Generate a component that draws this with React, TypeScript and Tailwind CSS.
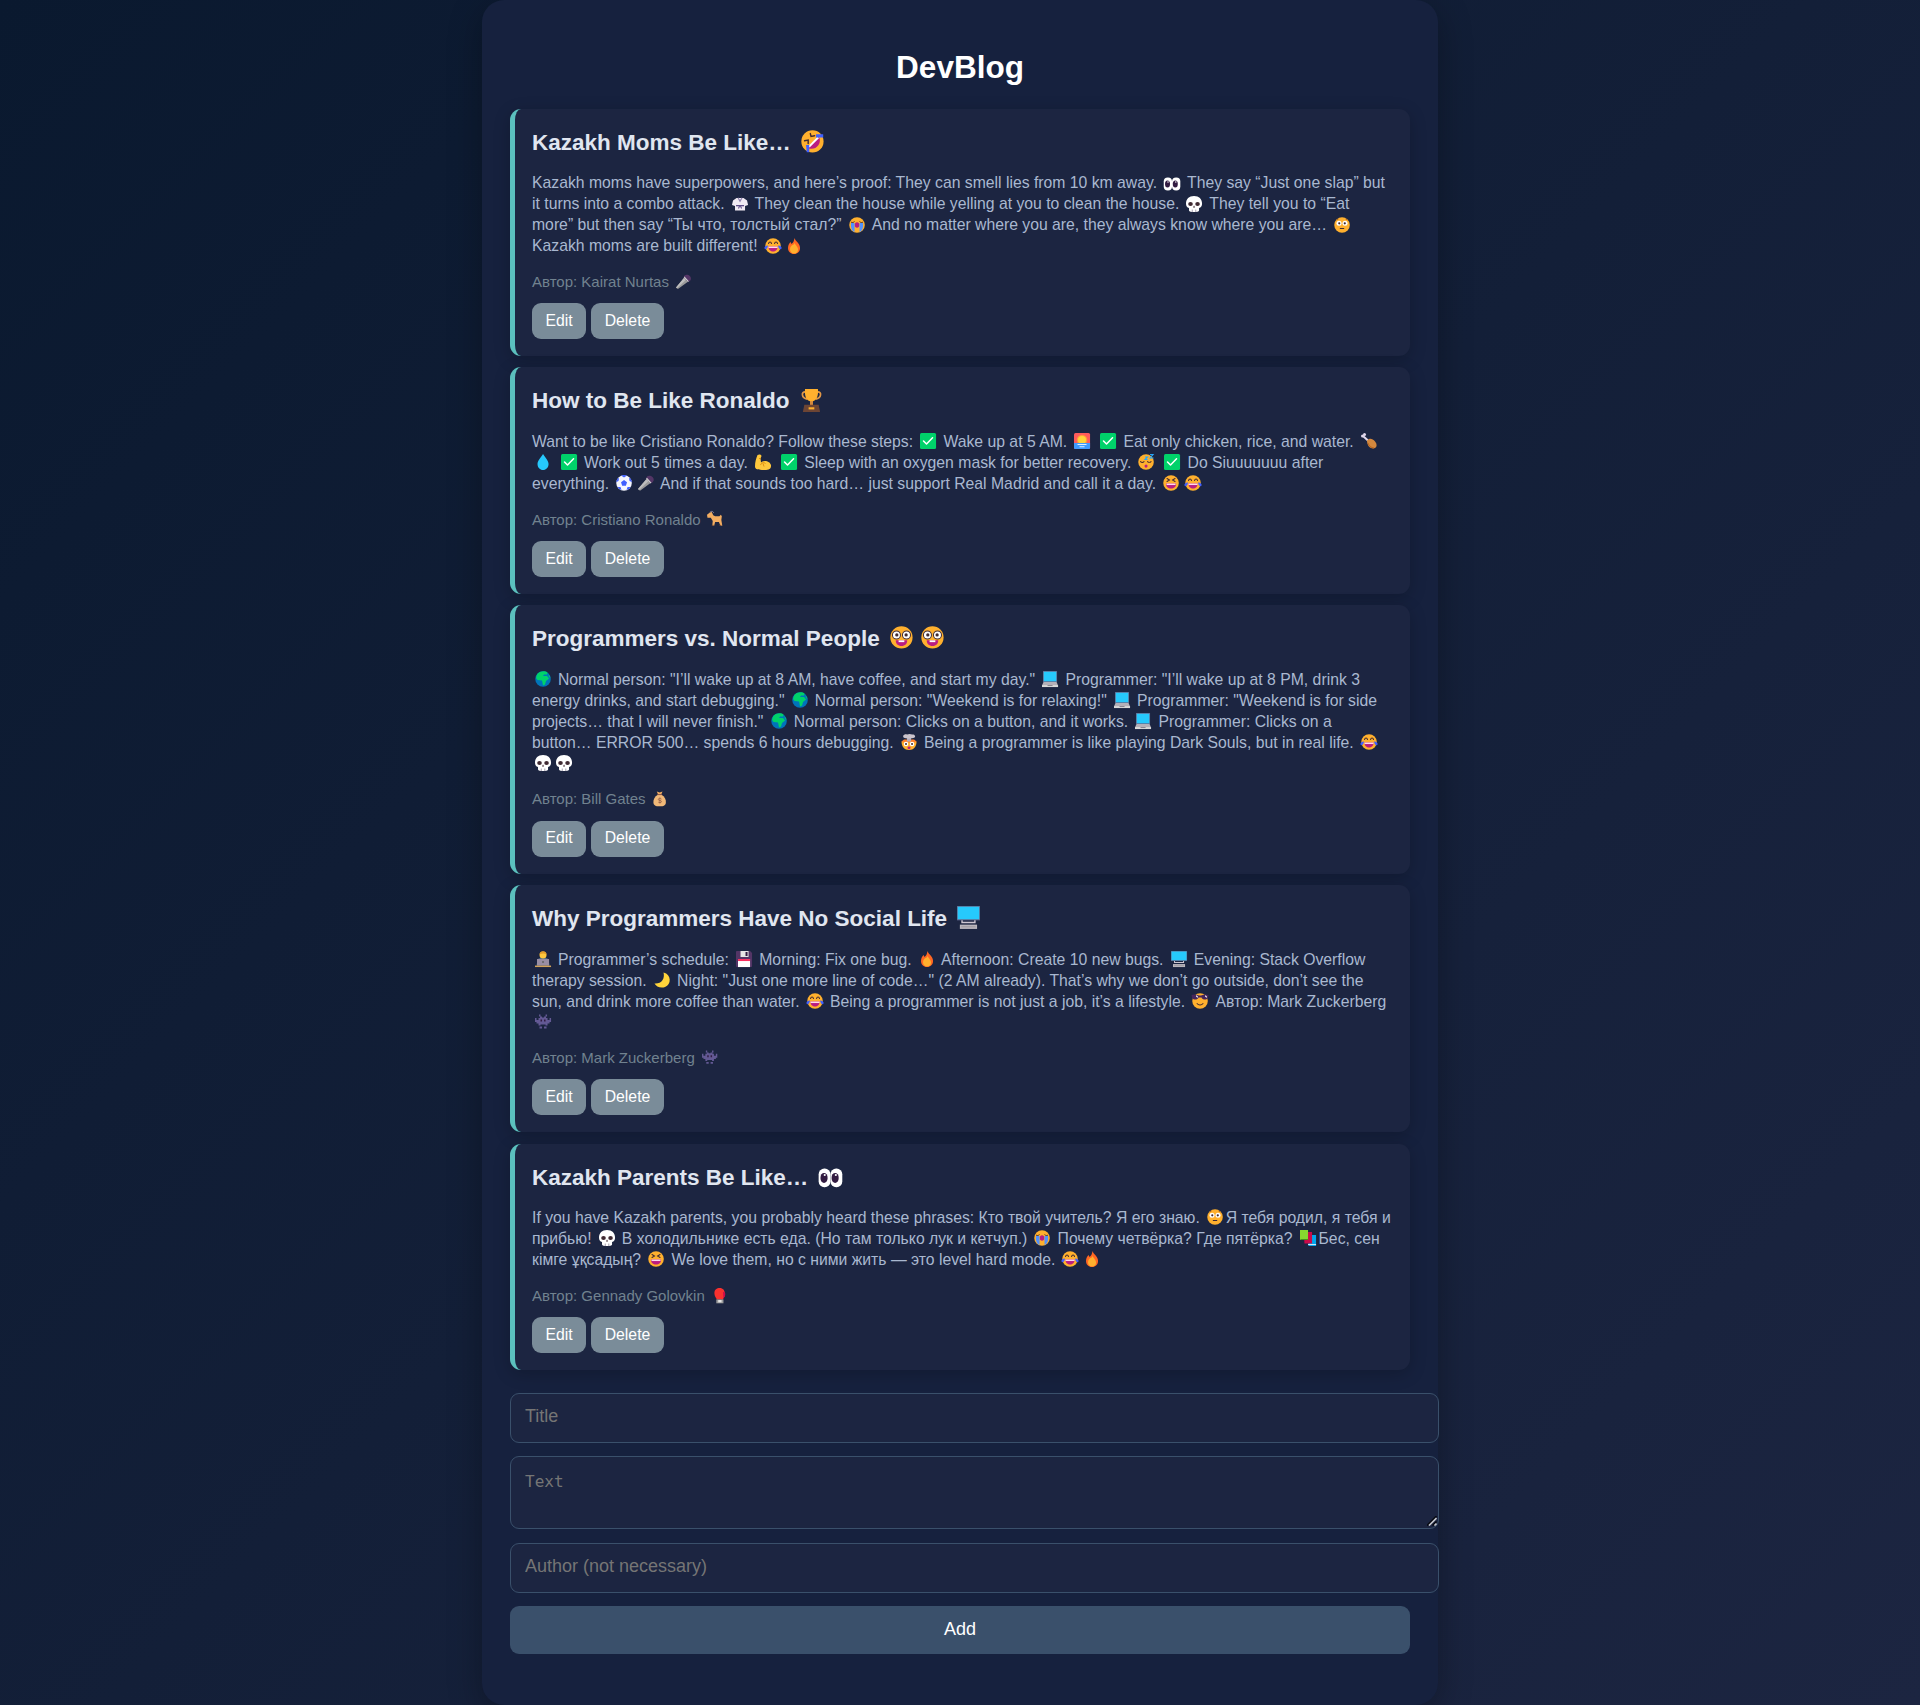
import React, { ReactNode } from "react";

const posts = [
  {
    title: "Kazakh Moms Be Like… 🤣",
    lines: [
      "Kazakh moms have superpowers, and here’s proof: They can smell lies from 10 km away. 👀 They say “Just one slap” but",
      "it turns into a combo attack. 🥋 They clean the house while yelling at you to clean the house. 💀 They tell you to “Eat",
      "more” but then say “Ты что, толстый стал?” 😭 And no matter where you are, they always know where you are… 😳",
      "Kazakh moms are built different! 😂🔥",
    ],
    author: "Kairat Nurtas 🎤",
  },
  {
    title: "How to Be Like Ronaldo 🏆",
    lines: [
      "Want to be like Cristiano Ronaldo? Follow these steps: ✅ Wake up at 5 AM. 🌅 ✅ Eat only chicken, rice, and water. 🍗",
      "💧 ✅ Work out 5 times a day. 💪 ✅ Sleep with an oxygen mask for better recovery. 😴 ✅ Do Siuuuuuuu after",
      "everything. ⚽🎤 And if that sounds too hard… just support Real Madrid and call it a day. 😆😂",
    ],
    author: "Cristiano Ronaldo 🐐",
  },
  {
    title: "Programmers vs. Normal People 🤓🤓",
    lines: [
      "🌍 Normal person: \"I’ll wake up at 8 AM, have coffee, and start my day.\" 💻 Programmer: \"I’ll wake up at 8 PM, drink 3",
      "energy drinks, and start debugging.\" 🌍 Normal person: \"Weekend is for relaxing!\" 💻 Programmer: \"Weekend is for side",
      "projects… that I will never finish.\" 🌍 Normal person: Clicks on a button, and it works. 💻 Programmer: Clicks on a",
      "button… ERROR 500… spends 6 hours debugging. 🤯 Being a programmer is like playing Dark Souls, but in real life. 😂",
      "💀💀",
    ],
    author: "Bill Gates 💰",
  },
  {
    title: "Why Programmers Have No Social Life 🖥",
    lines: [
      "🧑‍💻 Programmer’s schedule: 💾 Morning: Fix one bug. 🔥 Afternoon: Create 10 new bugs. 🖥 Evening: Stack Overflow",
      "therapy session. 🌙 Night: \"Just one more line of code…\" (2 AM already). That’s why we don’t go outside, don’t see the",
      "sun, and drink more coffee than water. 😂 Being a programmer is not just a job, it’s a lifestyle. 😎 Автор: Mark Zuckerberg",
      "👾",
    ],
    author: "Mark Zuckerberg 👾",
  },
  {
    title: "Kazakh Parents Be Like… 👀",
    lines: [
      "If you have Kazakh parents, you probably heard these phrases: Кто твой учитель? Я его знаю. 😳Я тебя родил, я тебя и",
      "прибью! 💀 В холодильнике есть еда. (Но там только лук и кетчуп.) 😭 Почему четвёрка? Где пятёрка? 📚Бес, сен",
      "кімге ұқсадың? 😆 We love them, но с ними жить — это level hard mode. 😂🔥",
    ],
    author: "Gennady Golovkin 🥊",
  },
];

const face = <circle cx="16" cy="16" r="15.5" fill="#ffb02e" />;
const dark = "#402a32";

const ICONS: Record<string, ReactNode> = {
  "🤣": (
    <>
      {face}
      <path d="M26 12c2 8-5 16-14 14-2-.5-3-2-1.500-3.500L22 11c1.500-1.500 3.500-1 4 1z" fill="#bb1d80" />
      <path d="m10 22.500 13-13 2 2-13 13z" fill="#fff" />
      <path d="m13 5 1 4 5-1M5 15l5-1 0 5" fill="none" stroke={dark} strokeWidth="2" strokeLinecap="round" />
      <path d="M21 6h10v4.500H21zM7 21h4.500v10H8z" fill="#3f5fff" />
    </>
  ),
  "👀": (
    <>
      <rect x="-0.5" y="5" width="16.500" height="26" rx="8" fill="#fff" />
      <rect x="16" y="5" width="16.500" height="26" rx="8" fill="#fff" />
      <ellipse cx="7" cy="18" rx="5" ry="7" fill="#321b41" />
      <ellipse cx="22.500" cy="18" rx="5" ry="7" fill="#321b41" />
      <circle cx="8" cy="14" r="1.500" fill="#fff" />
      <circle cx="23.500" cy="14" r="1.500" fill="#fff" />
    </>
  ),
  "🥋": (
    <>
      <path d="M9 4h14l7 5 2 9-6 2v9H6v-9l-6-2 2-9z" fill="#f0eaf3" />
      <path d="m11 4 5 9 5-9-2-1-3 5-3-5z" fill="#8d80ad" />
      <path d="M8 18h16v2.500H8z" fill="#574582" />
      <path d="m15 20-2 5M17 20l2 5" stroke="#574582" strokeWidth="2" />
    </>
  ),
  "💀": (
    <>
      <path d="M16 0C6 0 0 6 0 15c0 5 2 8 6 9v5c0 4 20 4 20 0v-5c4-1 6-4 6-9C32 6 26 0 16 0z" fill="#fff" />
      <ellipse cx="9" cy="16" rx="4.600" ry="4" fill={dark} />
      <ellipse cx="23" cy="16" rx="4.600" ry="4" fill={dark} />
      <path d="m16 19 2 4h-4z" fill={dark} />
      <path d="M12.500 27v5M19.500 27v5" stroke="#8b8296" strokeWidth="1.500" />
    </>
  ),
  "😭": (
    <>
      {face}
      <ellipse cx="16" cy="16" rx="4.500" ry="5.500" fill="#bb1d80" />
      <path d="M4 12h7v18c-5-2-8-8-7-18zM21 12h7c1 10-2 16-7 18z" fill="#5092ff" />
      <path d="M4 10c2.500 2 5 1 7-1M21 9c2 2 4.500 3 7 1" fill="none" stroke={dark} strokeWidth="1.800" />
    </>
  ),
  "😳": (
    <>
      {face}
      <circle cx="10" cy="12.500" r="5" fill="#fff" />
      <circle cx="22" cy="12.500" r="5" fill="#fff" />
      <circle cx="10.500" cy="12.500" r="2.200" fill={dark} />
      <circle cx="21.500" cy="12.500" r="2.200" fill={dark} />
      <path d="M12.500 23h7" stroke={dark} strokeWidth="2" strokeLinecap="round" />
      <path d="M5 6l4-2M27 6l-4-2" stroke="#9a5b22" strokeWidth="1.500" />
    </>
  ),
  "😂": (
    <>
      {face}
      <path d="M7 17h18c0 7-4 10-9 10s-9-3-9-10z" fill="#bb1d80" />
      <path d="M7 17h18v3H7z" fill="#ffd9ec" />
      <path d="M7 11c1-4 5-4 6 0M19 11c1-4 5-4 6 0" fill="none" stroke={dark} strokeWidth="2" strokeLinecap="round" />
      <path d="M6 15c-5 0-8 3-7 6 2 3 6 1 7-6zM26 15c5 0 8 3 7 6-2 3-6 1-7-6z" fill="#3f5fff" />
    </>
  ),
  "🔥": (
    <>
      <path d="M17 0c1 6 11 10 11 20 0 7-5 12-12 12S4 27 4 20c0-6 3-10 5-12l2 4c4-3 5-7 6-12z" fill="#ff6723" />
      <path d="M17 9c1 5 7 8 7 14 0 5-3 8-8 8s-8-4-8-8c0-5 3-8 5-9 2 0 4-2 4-5z" fill="#ffb02e" />
    </>
  ),
  "🎤": (
    <>
      <path d="M17 8l8 8L4 31.500l-4-3.500z" fill="#9b9b9b" />
      <path d="M17 8l4 4L2 30l-2-2z" fill="#bebebe" />
      <path d="M18 3c4-4 15 0 13 8-1 4-4 5-6 5l-9-9z" fill="#533566" />
      <path d="m17 6 9 10" stroke="#d3d3d3" strokeWidth="2.200" />
    </>
  ),
  "🏆": (
    <>
      <path d="M8 4C1 3 2 13 10 14M24 4c7-1 6 9-2 10" fill="none" stroke="#e19747" strokeWidth="2.400" />
      <path d="M7 0h18c1 10-2 16-7 17v5h-4v-5C9 16 6 10 7 0z" fill="#ffb02e" />
      <path d="M14 17h4v6h-4z" fill="#d3883e" />
      <path d="M6 22h20l2 10H4z" fill="#6d4534" />
      <path d="M12 25.500h8v3h-8z" fill="#ffb02e" />
    </>
  ),
  "✅": (
    <>
      <rect x="0" y="0" width="32" height="32" rx="3" fill="#00d26a" />
      <path d="m7 16 6 6L25 9.500" fill="none" stroke="#fff" strokeWidth="3" strokeLinecap="round" strokeLinejoin="round" />
    </>
  ),
  "🌅": (
    <>
      <rect x="0" y="0" width="32" height="32" rx="3" fill="#ff5b5b" />
      <circle cx="16" cy="14" r="10.500" fill="#ff9a3d" />
      <circle cx="16" cy="14" r="8" fill="#ffd43b" />
      <path d="M0 20h32v9c0 2-1 3-3 3H3c-2 0-3-1-3-3z" fill="#3f9cff" />
      <path d="M7 23h18M11 27.500h10" stroke="#dff0ff" strokeWidth="2" />
    </>
  ),
  "🍗": (
    <>
      <path d="m4 6 12 11" stroke="#e1d8ec" strokeWidth="4" />
      <circle cx="3" cy="6" r="3" fill="#e1d8ec" />
      <circle cx="7" cy="3" r="3" fill="#e1d8ec" />
      <path d="M12 15c6-6 11-3 16 2 5 6 4 13-4 14-8 0-12-8-12-16z" fill="#d3883e" />
      <path d="M14 20c2 6 6 9 12 10" fill="none" stroke="#b8651f" strokeWidth="2" />
    </>
  ),
  "💧": <path d="M16 0c4 7 11 13 11 20 0 7-5 12-11 12S5 27 5 20C5 13 12 7 16 0z" fill="#26c9fc" />,
  "💪": (
    <>
      <path d="M5 2c3-2 8-1 8 2l-2 5 1 8c5-6 19-3 20 6 0 7-4 9-13 9C7 32 0 31 0 25 0 16 2 9 5 2z" fill="#ffc83d" />
      <path d="M11 22c2-5 7-6 10-3M16 19l2 6M8 9h4" fill="none" stroke="#d67d00" strokeWidth="1.500" />
    </>
  ),
  "😴": (
    <>
      {face}
      <path d="M5 15c2 2 5 2 7 0M19 15c2 2 5 2 7 0" fill="none" stroke={dark} strokeWidth="2" strokeLinecap="round" />
      <ellipse cx="16" cy="24" rx="3" ry="3.200" fill="#bb1d80" />
      <path d="M14 6h5l-5 5h5M24 1h6l-6 7h7" fill="none" stroke="#26a9fc" strokeWidth="2.200" />
    </>
  ),
  "⚽": (
    <>
      <circle cx="16" cy="16" r="15.500" fill="#f4f6ff" />
      <path d="m16 10 6 4.500-2.300 7h-7.400l-2.300-7zM10 1l6 4 6-4-6-1zM0 14l5-2 1-6-3 1zM32 14l-5-2-1-6 3 1zM3 24l6 0 2 6-5-2zM29 24l-6 0-2 6 5-2z" fill="#3f5fff" />
    </>
  ),
  "😆": (
    <>
      {face}
      <path d="M6 17h20c0 7-4 10-10 10S6 24 6 17z" fill="#bb1d80" />
      <path d="M7 17h18v3H7z" fill="#ffd9ec" />
      <path d="m8 7 5 3-5 3M24 7l-5 3 5 3" fill="none" stroke={dark} strokeWidth="2" strokeLinecap="round" />
    </>
  ),
  "🐐": (
    <>
      <path d="M0 8l6-5 4-1 3 7 4 2h9l3-3 2 3-1 8 2 12h-4l-3-8h-8l-2 8h-4l1-10-4-7H1z" fill="#f3ad61" />
      <path d="M6 3c4-4 7-2 8 1" fill="none" stroke="#998ea4" strokeWidth="2" />
      <path d="M10 30h4M26 30h4" stroke="#6d4534" strokeWidth="2" />
    </>
  ),
  "🤓": (
    <>
      {face}
      <path d="M8 20h16c0 5-3 8-8 8s-8-3-8-8z" fill="#bb1d80" />
      <path d="M12 20h8v2.500h-8z" fill="#fff" />
      <circle cx="9" cy="12.500" r="5.600" fill="#fff" stroke={dark} strokeWidth="1.400" />
      <circle cx="23" cy="12.500" r="5.600" fill="#fff" stroke={dark} strokeWidth="1.400" />
      <circle cx="9.500" cy="12.500" r="2.300" fill={dark} />
      <circle cx="22.500" cy="12.500" r="2.300" fill={dark} />
    </>
  ),
  "🌍": (
    <>
      <circle cx="16" cy="16" r="15.500" fill="#0074ba" />
      <path d="M4 7c5-8 17-8 21-4l-1 4-6 0-2 3 8 0 4 5-6 5-2 7-4 2-2-10-9-1-3-4z" fill="#00d26a" />
      <path d="M27 6l4 8-3-2z" fill="#00d26a" />
    </>
  ),
  "💻": (
    <>
      <path d="M2 0h28v22H2z" fill="#636b8f" />
      <path d="M3.500 1.500h25v19h-25z" fill="#26c9fc" />
      <path d="M3 22h26l3 7H0z" fill="#b4b0b8" />
      <path d="M0 28h32v4H0z" fill="#d9d9d9" />
      <path d="M11 28h10v2H11z" fill="#85808a" />
    </>
  ),
  "🤯": (
    <>
      <path d="M1 15h30c0 10-6 17-15 17S1 25 1 15z" fill="#ffb02e" />
      <path d="M1 15l5-4h20l5 4-4 2H5z" fill="#ff822d" />
      <path d="M12 6h8v9h-8z" fill="#b4acbc" />
      <path d="M4 4c2-4 6-4 8-3 4-2 8-1 10 0 5-1 8 4 5 6-6 3-17 3-22 0z" fill="#c9c3cc" />
      <circle cx="10" cy="20" r="4.500" fill="#fff" />
      <circle cx="22" cy="20" r="4.500" fill="#fff" />
      <circle cx="10" cy="20" r="2" fill={dark} />
      <circle cx="22" cy="20" r="2" fill={dark} />
      <ellipse cx="16" cy="27.500" rx="3" ry="2.800" fill="#bb1d80" />
    </>
  ),
  "💰": (
    <>
      <path d="m10 1 6 2 6-2-3 7h-6z" fill="#f3ad61" />
      <path d="M12 8h8c6 4 10 10 9 17-1 5-4 7-13 7S4 30 3 25c-1-7 3-13 9-17z" fill="#f0b878" />
      <path d="M11 7.500h10" stroke="#8c5543" strokeWidth="2" />
      <path d="M20 17c-2-3-7-2-7 1 1 3 7 1 7 4s-6 3-7 1M16.500 14v12" fill="none" stroke="#8c5543" strokeWidth="1.500" />
    </>
  ),
  "🖥": (
    <>
      <path d="M0 0h32v20H0z" fill="#636b8f" />
      <path d="M1 1h30v17.500H1z" fill="#26c9fc" />
      <path d="M7 20v3h18v-3" fill="none" stroke="#cdc6d2" strokeWidth="2" />
      <path d="M4 26h24v6H4z" fill="#b9b5bc" />
      <path d="M6 29h20" stroke="#8d8992" strokeWidth="1" />
    </>
  ),
  "🧑‍💻": (
    <>
      <path d="M5 17c2-5 20-5 22 0l2 12H3z" fill="#4a6b8a" />
      <circle cx="16" cy="8" r="7" fill="#ffc83d" />
      <path d="M9 7c0-9 14-9 14 0-4-3-9-3-14 0z" fill="#e39d2b" />
      <path d="M4 16h24v13H4z" fill="#998ea4" />
      <circle cx="16" cy="22" r="2" fill="#636363" />
      <path d="M0 29h32v3H0z" fill="#d3a35a" />
    </>
  ),
  "💾": (
    <>
      <path d="M0 2c0-1 1-2 2-2h26l4 4v26c0 1-1 2-2 2H2c-1 0-2-1-2-2z" fill="#533566" />
      <path d="M9 0h16v12H9z" fill="#e6e6e6" />
      <path d="M19 2h4v8h-4z" fill="#321b41" />
      <path d="M4 16h24v16H4z" fill="#fff" />
      <path d="M4 16h24v4H4z" fill="#f92f60" />
    </>
  ),
  "🌙": <path d="M19 1c16 4 16 24 3 29C13 33 4 29 1 23c14 1 21-9 18-22z" fill="#ffd43b" />,
  "😎": (
    <>
      {face}
      <path d="M-1 4c5-2 10-1 15 1h4c5-2 10-3 15-1l-1 5c-1 5-11 6-13 0h-6c-2 6-12 5-13 0z" fill="#46255c" />
      <path d="m9 6 2 2M27 6l2 2" stroke="#fff" strokeWidth="2.200" strokeLinecap="round" />
      <path d="M10 21c3 4 9 4 12 0" fill="none" stroke={dark} strokeWidth="2" strokeLinecap="round" />
    </>
  ),
  "👾": (
    <>
      <path d="M8 1h3v4h3v2h4V5h3V1h3v4h-2v3h3v4h4V8h3v8h-3v3h-4v4h-4v-2H11v2H7v-4H3v-3H0V8h3v4h4V8h3V5H8zM9 25h5v4H9zM18 25h5v4h-5z" fill="#635994" />
      <path d="M11 11h3v4h-3zM18 11h3v4h-3z" fill="#321b41" />
    </>
  ),
  "📚": (
    <>
      <path d="M15 10h17v22H17z" fill="#00a6ed" />
      <path d="M16 28h16v2H16z" fill="#d8eefa" />
      <path d="M7 4h17v23H9z" fill="#ca0b4a" />
      <path d="M0 0h16v20H2c-1 0-2-1-2-2z" fill="#86d72f" />
      <path d="M1 18h15v2H2z" fill="#44911b" />
    </>
  ),
  "🥊": (
    <>
      <path d="M5 11C5 3 10 0 16 0c7 0 11 5 11 12 0 6-3 8-4 12H10c-1-4-5-6-5-13z" fill="#f8312f" />
      <path d="M23 9c4-2 6 3 4 8l-3 5z" fill="#ca0b4a" />
      <path d="M9 24h15v8H9z" fill="#9b9b9b" />
      <path d="M13 25h7v5h-7z" fill="#e6e6e6" />
    </>
  ),
};

const EMOJI = /(🧑‍💻|✅|⚽|[\u{1F300}-\u{1FAFF}])/u;

function Rich({ text }: { text: string }) {
  return (
    <>
      {text.split(EMOJI).map((part, i) =>
        i % 2 === 1 ? (
          <span key={i} className="inline-block h-[1em] w-[1.37em] text-center leading-none">
            <svg
              viewBox="0 0 32 32"
              role="img"
              aria-label={part}
              className="inline-block h-[1.02em] w-[1.02em] overflow-visible align-[-0.14em]"
            >
              {ICONS[part]}
            </svg>
          </span>
        ) : (
          <span key={i}>{part}</span>
        )
      )}
    </>
  );
}

export default function App() {
  return (
    <div className="flex h-[1705px] w-full justify-center bg-[linear-gradient(135deg,#0a192f,#1c2541)] font-['Liberation_Sans',sans-serif]">
      <main className="flex h-[1705px] w-[956px] flex-col rounded-[22px] bg-[#16213e] px-7 pt-12 shadow-[0_9px_34px_rgba(0,0,0,0.3)]">
        <h1 className="h-[60.7px] pt-px text-center text-[31.5px] leading-[37px] font-bold text-white">DevBlog</h1>
        <div className="flex flex-col gap-[11.25px]">
          {posts.map((p) => (
            <article
              key={p.title}
              className="flex flex-col rounded-[11px] border-l-[5px] border-[#5bc0be] bg-[#1c2541] px-[17px] pb-[17px] shadow-[0_4px_17px_rgba(0,0,0,0.2)]"
            >
              <h2 className="mt-[20px] h-[43.7px] text-[22.5px] leading-[28px] font-bold whitespace-nowrap text-[#e0e6f0]">
                <Rich text={p.title} />
              </h2>
              <div className="text-[15.75px] leading-[21px] text-[#a9b8d0]">
                {p.lines.map((l) => (
                  <div key={l} className="h-[21px] whitespace-nowrap">
                    <Rich text={l} />
                  </div>
                ))}
              </div>
              <div className="mt-[16.6px] h-[30.2px] text-[15px] leading-[17px] whitespace-nowrap text-[#71828f]">
                <Rich text={"Автор: " + p.author} />
              </div>
              <div className="flex gap-[5px]">
                <button className="h-9 w-[54px] rounded-[9px] bg-[#7a8c99] pb-px text-[15.75px] text-white">Edit</button>
                <button className="h-9 w-[73px] rounded-[9px] bg-[#7a8c99] pb-px text-[15.75px] text-white">Delete</button>
              </div>
            </article>
          ))}
        </div>
        <form className="mt-[22.8px] flex flex-col items-start">
          <input
            placeholder="Title"
            className="h-[50px] w-[929px] rounded-[9px] border border-[#3a506b] bg-[#1c2541] px-[14px] pb-[2px] text-[18px] text-white placeholder:text-[#757575]"
          />
          <div className="relative mt-[13px] h-[73px] w-[929px]">
            <textarea
              placeholder="Text"
              className="block h-[73px] w-[929px] resize-none rounded-[9px] border border-[#3a506b] bg-[#1c2541] px-[14px] py-[14px] font-['DejaVu_Sans_Mono',monospace] text-[16px] leading-[21px] text-white placeholder:text-[#757575]"
            />
            <svg viewBox="0 0 10 10" className="absolute right-[2px] bottom-[3px] h-[10px] w-[10px]">
              <path d="M0 9.500 9.500 0M5.500 9.500l4-4" fill="none" stroke="#05070d" strokeWidth="1.500" />
              <path d="M2 9.500 9.500 2M7.500 9.500l2-2" fill="none" stroke="#c4c6cc" strokeWidth="1.600" />
            </svg>
          </div>
          <input
            placeholder="Author (not necessary)"
            className="mt-[14px] h-[50px] w-[929px] rounded-[9px] border border-[#3a506b] bg-[#1c2541] px-[14px] pb-[2px] text-[18px] text-white placeholder:text-[#757575]"
          />
          <button type="button" className="mt-[13px] h-12 w-[900px] rounded-[9px] bg-[#3a506b] text-[18px] text-white">
            Add
          </button>
        </form>
      </main>
    </div>
  );
}
